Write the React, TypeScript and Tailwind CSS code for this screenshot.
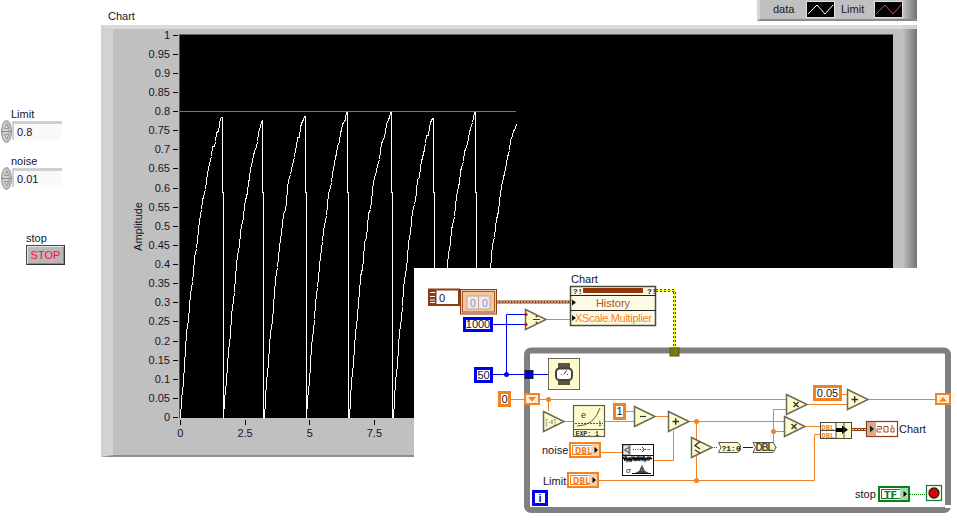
import { ReactNode } from "react";

const Y_LABELS = ["1","0.95","0.9","0.85","0.8","0.75","0.7","0.65","0.6","0.55","0.5","0.45","0.4","0.35","0.3","0.25","0.2","0.15","0.1","0.05","0"];
const X_LABELS = ["0", "2.5", "5", "7.5"];

const FALLS = [221.7, 262.3, 304.7, 347.3, 391.3, 432.7, 475.3, 516];
const TOPS = [117, 120, 116, 112, 112, 118, 112, 124];

// same recipe as the diagram: 1 - e^-x per sample with a little noise
function tracePoints() {
  const pts: string[] = [];
  let seed = 7;
  let start = 180;
  FALLS.forEach((fall, c) => {
    const n = Math.floor((fall - start) / 1.295);
    const scale = (417.5 - TOPS[c]) / (1 - Math.exp(-0.05 * n));
    for (let i = 0; i <= n; i++) {
      seed = (seed * 137 + 59) % 1009;
      const noise = i > 2 && i < n ? ((seed / 1009) - 0.5) * 6 : 0;
      const y = 417.5 - scale * (1 - Math.exp(-0.05 * i)) + noise;
      pts.push(`${Math.round(start + i * 1.295) + 0.5},${Math.round(y) + 0.5}`);
    }
    if (c < FALLS.length - 1) {
      const fx = Math.round(fall) + 0.5;
      pts.push(`${fx},${TOPS[c] + 0.5}`, `${fx},192.5`, `${fx + 1},192.5`, `${fx + 1},418`);
      start = fall + 1.5;
    }
  });
  return pts.join(" ");
}

function Numeric({ label, value }: { label: string; value: string }) {
  return (
    <div>
      <div className="ml-[11px] h-4 leading-4">{label}</div>
      <div className="-mt-[2px] ml-px flex h-[23px] items-start">
        <svg width="11" height="23" viewBox="0 0 11 23" className="shrink-0">
          <ellipse cx="5.5" cy="11.5" rx="5" ry="11" fill="#bdbdbd" stroke="#9a9a9a" />
          <ellipse cx="4.5" cy="11.5" rx="2.5" ry="9" fill="#d4d4d4" />
          <line x1="0" y1="11.5" x2="11" y2="11.5" stroke="#8a8a8a" />
          <path d="M5.5 4 L3.5 8.5 H7.5 Z M5.5 19 L3.5 14.5 H7.5 Z" fill="#e6e6e6" stroke="#666" strokeWidth="0.6" />
        </svg>
        <div className="mt-px h-[19px] w-[50px] border-l-2 border-t-[3px] border-l-[#d0d0d0] border-t-[#cfcfcf] bg-[#f9f9f9] pl-[3px] leading-[16px] text-[#111133]">
          {value}
        </div>
      </div>
    </div>
  );
}

function Zigzag({ color }: { color: string }) {
  return (
    <svg width="29" height="17" viewBox="0 0 29 17" className="shrink-0">
      <rect width="29" height="17" fill="#000" stroke="#e2e2e2" strokeWidth="2" />
      <polyline points="2,13 11,4 19,13 27,4" fill="none" stroke={color} />
    </svg>
  );
}

function Constant({ className, children }: { className: string; children: ReactNode }) {
  return (
    <div className={`absolute flex items-center justify-center border-[3px] bg-white leading-none ${className}`}>
      {children}
    </div>
  );
}

function Tri({ x, y, children }: { x: number; y: number; children?: ReactNode }) {
  return (
    <g>
      <polygon
        points={`${x + 0.5},${y + 0.5} ${x + 21},${y + 10.5} ${x + 0.5},${y + 20.5}`}
        fill="#fdfbcb"
        stroke="#6a6a58"
        strokeWidth="1.5"
      />
      {children}
    </g>
  );
}

function Terminal({ x, y, w, color, soft, text, tw }: { x: number; y: number; w: number; color: string; soft: string; text: string; tw: number }) {
  return (
    <g>
      <rect x={x + 1} y={y + 1} width={w - 2} height={14} fill="#fff" stroke={color} strokeWidth="2" />
      <rect x={x + 3.5} y={y + 3.5} width={w - 7} height={9} fill="#fff" stroke={color} />
      <rect x={x + w - 10} y={y + 2} width={8} height={12} fill={soft} />
      <text x={x + 6} y={y + 11.5} fontSize="9" fontWeight="700" fill={color} textLength={tw} lengthAdjust="spacingAndGlyphs" fontFamily="'DejaVu Sans', sans-serif">{text}</text>
      <path d={`M${x + w - 6.5} ${y + 5} L${x + w - 3} ${y + 8} L${x + w - 6.5} ${y + 11} Z`} fill="#000" />
    </g>
  );
}

function BlockDiagram() {
  const OR = "#f58220";
  return (
    <svg width="543" height="252" viewBox="414 268 543 252" className="absolute left-0 top-0">
      {/* loop */}
      <rect x="527" y="350.5" width="421" height="159.5" rx="4" fill="none" stroke="#808080" strokeWidth="6" />
      <rect x="945" y="505" width="6" height="3" fill="#fff" />

      {/* orange wires */}
      <g fill="none" stroke={OR} strokeWidth="1">
        <path d="M511 399.5 H524" />
        <path d="M539 399.5 H786" />
        <path d="M548.5 399.5 V411" />
        <path d="M564 421.5 H573" />
        <path d="M605 421.5 H634" />
        <path d="M626 411.5 H634" />
        <path d="M655 416.5 H668" />
        <path d="M689 421.5 H784" />
        <path d="M696.5 421.5 V480" />
        <path d="M601 452.5 H622" />
        <path d="M654 460.5 H673.5 V431" />
        <path d="M599 480.5 H814.5 V434.5 H820" />
        <path d="M777 447.5 H773.5 V409.5 H786" />
        <path d="M773.5 431.5 H784" />
        <path d="M805 426.5 H820" />
        <path d="M807 404.5 H847" />
        <path d="M842 394.5 H847" />
        <path d="M868 399.5 H936" />
        <path d="M546 319.5 H572" />
      </g>
      <g fill={OR}>
        <circle cx="548.5" cy="399.5" r="2.5" />
        <circle cx="696.5" cy="421.5" r="2.5" />
        <circle cx="696.5" cy="480.5" r="2.5" />
        <circle cx="773.5" cy="431.5" r="2.5" />
      </g>

      {/* blue wires */}
      <g fill="none" stroke="#0000f0" strokeWidth="1">
        <path d="M492 324.5 H526" />
        <path d="M492 374.5 H548" />
        <path d="M506.5 374.5 V314.5 H526" />
        <path d="M743 447.5 H753" />
      </g>
      <circle cx="506.5" cy="374.5" r="2.5" fill="#0000f0" />

      {/* striped wires */}
      <line x1="497" y1="302" x2="571" y2="302" stroke="#8c3c12" strokeWidth="3" />
      <line x1="497" y1="302" x2="571" y2="302" stroke="#f4e4d8" strokeWidth="1" strokeDasharray="2 1" />
      <line x1="852" y1="429.5" x2="866" y2="429.5" stroke="#8c3c12" strokeWidth="3" />
      <line x1="852" y1="429.5" x2="866" y2="429.5" stroke="#f4e4d8" strokeWidth="1" strokeDasharray="2 1" />
      <path d="M656 290.5 H674.5 V349" fill="none" stroke="#222" strokeWidth="3" strokeDasharray="2 2" />
      <path d="M656 290.5 H674.5 V349" fill="none" stroke="#f2f200" strokeWidth="1.4" />
      <path d="M712 447.5 H718" stroke="#008000" strokeDasharray="1 1" />
      <path d="M910 494.5 H926" stroke="#008000" strokeDasharray="1 1" />

      {/* tunnels */}
      <rect x="670" y="348" width="9" height="8" fill="#7a7a10" stroke="#55550a" />
      <rect x="525" y="370.5" width="8" height="8" fill="#0000e0" stroke="#223" />
      <rect x="525" y="394" width="14" height="10" fill="#fdf0d8" stroke={OR} strokeWidth="2" />
      <path d="M528 397 H536 L532 401.5 Z" fill={OR} />
      <rect x="936" y="394" width="14" height="10" fill="#fdf0d8" stroke={OR} strokeWidth="2" />
      <path d="M939 401.5 H947 L943 397 Z" fill={OR} />

      {/* brown constants */}
      <rect x="429" y="289.5" width="30" height="15.5" fill="#fff" stroke="#8c3c12" strokeWidth="2" />
      <rect x="429" y="289.5" width="7.5" height="15.5" fill="#8c3c12" />
      <path d="M430 292.5 H435 M430 296.5 H435 M430 300 H435 M430 302.5 H435" stroke="#fff" strokeWidth="1.2" />
      <text x="439" y="301.5" fontSize="11" fill="#111133">0</text>
      <rect x="460.5" y="289.5" width="36" height="24.5" fill="#f3c6a2" stroke="#8c3c12" />
      <rect x="462.5" y="291.5" width="32" height="20.5" fill="#f3c6a2" stroke="#a9582a" />
      <rect x="467" y="296" width="23" height="13" fill="#eeeaf0" stroke="#c8a68c" />
      <line x1="478.5" y1="296" x2="478.5" y2="309" stroke="#c8a68c" />
      <text x="470" y="306.5" fontSize="10.5" fill="#8892b8">0</text>
      <text x="482" y="306.5" fontSize="10.5" fill="#8892b8">0</text>

      {/* property node */}
      <rect x="570.5" y="286.5" width="85" height="39" fill="#fdfbe6" stroke="#4a4a3a" strokeWidth="1.5" />
      <line x1="570" y1="295.5" x2="656" y2="295.5" stroke="#222" />
      <line x1="570" y1="310.5" x2="656" y2="310.5" stroke="#222" />
      <rect x="583" y="288" width="60" height="5" fill="#94360a" />
      <text x="573" y="294" fontSize="8" fontWeight="700" fill="#222" fontFamily="'Liberation Mono', monospace">?!</text>
      <text x="647" y="294" fontSize="8" fontWeight="700" fill="#222" fontFamily="'Liberation Mono', monospace">?!</text>
      <path d="M572 299.5 L576 302.5 L572 305.5 Z M572 315 L576 318 L572 321 Z" fill="#111" />
      <text x="613" y="307" fontSize="11" fill="#a4562a" textAnchor="middle">History</text>
      <text x="575" y="322" fontSize="11" fill={OR} textLength="77">XScale.Multiplier</text>

      {/* prims */}
      <Tri x={525} y={309}>
        <path d="M533 319.5 H540" stroke="#333" />
        <circle cx="536.5" cy="316.5" r="0.9" fill="#333" />
        <circle cx="536.5" cy="322.5" r="0.9" fill="#333" />
        <circle cx="526" cy="314.5" r="1.6" fill="#e00000" />
        <circle cx="526" cy="324.5" r="1.6" fill="#e00000" />
      </Tri>

      <rect x="548.5" y="358.5" width="31" height="31" fill="#fdfbcb" stroke="#6a6a58" />
      <rect x="558" y="363" width="12" height="5.5" fill="#55554a" />
      <rect x="558" y="380" width="12" height="5" fill="#55554a" />
      <rect x="556" y="368.5" width="16" height="11.5" rx="3.5" fill="#fff" stroke="#44443a" strokeWidth="2" />
      <path d="M564 374.5 L566.5 370.5 M561 374.5 H561.8 M568 374.5 H567" stroke="#333" />

      <Tri x={543} y={411}>
        <text x="545" y="424" fontSize="8" fill="#333" textLength="11" lengthAdjust="spacingAndGlyphs" fontFamily="'Liberation Mono', monospace">[-x]</text>
      </Tri>

      <rect x="573.5" y="405.5" width="31" height="31" fill="#fdfbcb" stroke="#5f5f4e" strokeWidth="1.2" />
      <path d="M573.5 429.5 H604.5" stroke="#5f5f4e" />
      <path d="M575 423.5 H603" stroke="#555" strokeDasharray="2 1" />
      <path d="M577 426 Q594 426 600 408" fill="none" stroke="#555" />
      <text x="581" y="418" fontSize="9" fill="#333">e</text>
      <text x="598" y="425.5" fontSize="6.5" fill="#333">1</text>
      <text x="575.5" y="435.5" fontSize="6.5" fontWeight="700" fill="#333" fontFamily="'Liberation Mono', monospace">EXP: 1</text>

      <Tri x={634} y={406}>
        <path d="M640 416.5 H646" stroke="#333" strokeWidth="1.2" />
      </Tri>
      <Tri x={668} y={411}>
        <path d="M672.5 421.5 H679 M675.7 418.2 V424.8" stroke="#333" strokeWidth="1.4" />
      </Tri>
      <Tri x={691} y={437}>
        <path d="M700 441.5 L695 445.5 L700 449 M695 450 L700 453" fill="none" stroke="#333" strokeWidth="1.4" />
      </Tri>
      <Tri x={786} y={394}>
        <path d="M793.5 402 L798.5 407 M798.5 402 L793.5 407" stroke="#333" strokeWidth="1.4" />
      </Tri>
      <Tri x={784} y={416}>
        <path d="M791.5 424 L796.5 429 M796.5 424 L791.5 429" stroke="#333" strokeWidth="1.4" />
      </Tri>
      <Tri x={847} y={389}>
        <path d="M851.5 399.5 H858 M854.7 396.2 V402.8" stroke="#333" strokeWidth="1.4" />
      </Tri>

      {/* gaussian noise */}
      <rect x="622.5" y="444.5" width="31" height="31" fill="#fff" stroke="#111" />
      <path d="M622.5 455.5 H653.5" stroke="#111" />
      <rect x="623" y="445" width="7" height="10" fill="#e8e8e8" stroke="#333" strokeWidth="0.6" />
      <path d="M625 449 H627 L629 446.5 V453.5 L627 451 H625 Z" fill="none" stroke="#222" strokeWidth="0.8" />
      <path d="M635 449.5 H650" stroke="#e00000" strokeDasharray="1 1.5" />
      <path d="M633 449.5 h1 M642 447 l2.5 2.5 l-2.5 2.5 M649 449.5 h1" fill="none" stroke="#e00000" />
      <path d="M623 459 l1 -2 l1 4 l1 -5 l1 5 l1 -3 l1 3 l1 -4 l1 5 l1 -5 l1 3 l1 -3 l1 4 l1 -4 l1 4 l1 -5 l1 5 l1 -4 l1 3 l1 -3 l1 4 l1 -5 l1 5 l1 -3 l1 2 l1 -3 l1 3 l1 -3 l1 2 l1 -1" fill="none" stroke="#000" strokeWidth="1.1" />
      <text x="626" y="472.5" fontSize="8" fill="#111">σ</text>
      <path d="M634 473.5 L639 471 L642 464.5 L645 471 L650 473.5 Z" fill="#444" />
      <path d="M636 473.5 H650 M639 470 H646 M640.5 467 H644" stroke="#fff" strokeWidth="0.6" strokeDasharray="1 1" />
      <path d="M632 473.5 H651" stroke="#111" />

      <Terminal x={569} y={442} w={32} color={OR} soft="#fbd0a8" text="DBL" tw={17} />
      <Terminal x={567} y={472} w={32} color={OR} soft="#fbd0a8" text="DBL" tw={17} />
      <Terminal x={878} y={486} w={32} color="#0a8020" soft="#a8d8a8" text="TF" tw={13} />

      {/* conversions */}
      <path d="M718.5 442.5 H738 Q743.5 447.5 738 452.5 H718.5 L721 447.5 Z" fill="#fdfbcb" stroke="#555" />
      <text x="721.5" y="450.5" fontSize="8" fontWeight="700" fill="#222" fontFamily="'Liberation Mono', monospace">?1:0</text>
      <path d="M753 442.5 H773 Q778 447.5 773 452.5 H753 L755.5 447.5 Z" fill="#fdfbcb" stroke="#555" />
      <text x="755.5" y="451" fontSize="10" fontWeight="700" fill="#4a4a3a" fontFamily="'Liberation Sans', sans-serif" textLength="18">DBL</text>

      {/* bundle */}
      <rect x="820.5" y="422.5" width="31" height="16" fill="#fdfbcb" stroke="#4a4a3a" />
      <rect x="821" y="423" width="15" height="15" fill="#fff" />
      <path d="M820.5 430.5 H836 M836 422.5 V438.5" stroke="#4a4a3a" />
      <text x="821.5" y="429.8" fontSize="7" fontWeight="700" fill={OR} fontFamily="'Liberation Mono', monospace">DBL</text>
      <text x="821.5" y="437.5" fontSize="7" fontWeight="700" fill={OR} fontFamily="'Liberation Mono', monospace">DBL</text>
      <path d="M836 428 H842 V425.5 L848 429.8 L842 434 V432 H836 Z" fill="#000" />
      <path d="M844 422.5 V438.5" stroke="#4a4a3a" />

      {/* chart terminal */}
      <rect x="866.5" y="421.5" width="31" height="15" fill="#fff" stroke="#8c3c12" strokeWidth="1.2" />
      <rect x="867" y="422" width="9" height="14" fill="#dfa98c" />
      <path d="M870 425.5 L874 429 L870 432.5 Z" fill="#222" />
      <path d="M877 426.5 H881.5 V429 H877 V432 H881.5 M884 426.5 H888 V432 H884 Z M891 426 H893 M891 428 H894 V432 H891 V428" fill="none" stroke="#8c3c12" strokeWidth="0.9" />

      {/* stop condition */}
      <rect x="926.5" y="485.5" width="15" height="15" fill="#fdfbe0" stroke="#157a30" strokeWidth="1.2" />
      <circle cx="934" cy="493" r="5" fill="#e00000" stroke="#222" strokeWidth="1.3" />
    </svg>
  );
}

export default function App() {
  const trace = tracePoints();
  return (
    <div className="relative flex h-[520px] w-[957px] overflow-hidden bg-white text-[11px] text-[#15152a] [font-family:'Liberation_Sans',sans-serif]">
      {/* front panel controls */}
      <div className="w-[101px] shrink-0 pt-[106px]">
        <Numeric label="Limit" value="0.8" />
        <div className="mt-[10px]">
          <Numeric label="noise" value="0.01" />
        </div>
        <div className="ml-[26px] mt-[40px] h-4 leading-4">stop</div>
        <div className="-mt-px ml-[26px] flex h-[20px] w-[39px] items-center justify-center border border-[#44444c] border-b-[#333] border-r-[#333] bg-[#b9b9b9] text-[#ff0a3c] shadow-[inset_1px_1px_0_#e6e6e6,inset_-1px_-1px_0_#8a8a8a]">
          STOP
        </div>
      </div>

      {/* chart */}
      <div className="w-[816px] shrink-0">
        <div className="flex h-[25px] items-start justify-between">
          <div className="ml-[7px] mt-[8px] h-4 leading-4">Chart</div>
          <div className="flex h-[21px] w-[160px] items-center border-b-2 border-l-[3px] border-b-[#8a8a8a] border-l-[#d6d6d6] bg-[#c0c0c0]">
            <span className="ml-[13px] w-[33px]">data</span>
            <Zigzag color="#ffffff" />
            <span className="ml-[6px] w-[33px]">Limit</span>
            <Zigzag color="#e8484c" />
            <div className="ml-auto h-full w-[14px] bg-gradient-to-r from-[#c0c0c0] to-[#737373]" />
          </div>
        </div>

        <div className="flex h-[432px]">
          <div className="w-[802px] border-b-2 border-l-[12px] border-t-4 border-b-[#8c8c8c] border-l-[#d2d2d2] border-t-[#dadada] bg-[#c0c0c0]">
            <div className="flex pt-[5px]">
              <div className="flex h-[384px] w-[33px] items-center justify-end">
                <span className="rotate-180 leading-4 [writing-mode:vertical-rl]">Amplitude</span>
              </div>
              <div className="-mt-[5.5px] flex h-[395.5px] w-[33px] flex-col justify-between">
                {Y_LABELS.map((label) => (
                  <div key={label} className="flex h-[13px] items-center justify-end leading-[13px]">
                    <span>{label}</span>
                    <span className="ml-[3px] mr-px h-px w-[5px] bg-black" />
                  </div>
                ))}
              </div>
              <div>
                <div className="h-[384px] w-[714px] border-l border-t border-l-[#505050] border-t-[#606060] bg-black">
                  <svg width="713" height="383" viewBox="180 35 713 383" className="block">
                    <line x1="180" y1="111.5" x2="516" y2="111.5" stroke="#e8484c" />
                    <polyline points={trace} fill="none" stroke="#fff" strokeWidth="1" shapeRendering="crispEdges" />
                  </svg>
                </div>
                <div className="-ml-[31px] flex">
                  {X_LABELS.map((label) => (
                    <div key={label} className="flex w-[64.7px] flex-col items-center">
                      <span className="mt-[2px] h-[5px] w-px bg-black" />
                      <span className="leading-4">{label}</span>
                    </div>
                  ))}
                </div>
              </div>
            </div>
          </div>
          <div className="w-[14px] border-t-4 border-t-[#d2d2d2] bg-gradient-to-r from-[#c0c0c0] to-[#737373]" />
        </div>
      </div>

      {/* block diagram window on top of the panel */}
      <div className="absolute left-[414px] top-[268px] h-[252px] w-[543px] bg-white">
        <BlockDiagram />
        <div className="absolute left-[157px] top-[3px] leading-4">Chart</div>
        <div className="absolute left-[128px] top-[174px] leading-4">noise</div>
        <div className="absolute left-[129px] top-[205px] leading-4">Limit</div>
        <div className="absolute left-[485px] top-[153px] leading-4">Chart</div>
        <div className="absolute left-[441px] top-[218px] leading-4">stop</div>

        <Constant className="left-[49px] top-[49px] h-[15px] w-[30px] border-[#0000f0]">1000</Constant>
        <Constant className="left-[60px] top-[99px] h-[16px] w-[19px] border-[#0000f0]">50</Constant>
        <Constant className="left-[84px] top-[123px] h-[16px] w-[13px] border-[#f58220]">0</Constant>
        <Constant className="left-[199px] top-[135px] h-[17px] w-[13px] border-[#f58220]">1</Constant>
        <Constant className="left-[399px] top-[117px] h-[16px] w-[29px] border-[#f58220]">0.05</Constant>
        <Constant className="left-[118px] top-[222px] h-[16px] w-[16px] border-2 border-[#0000f0] font-bold text-[#0000f0]">i</Constant>
      </div>
    </div>
  );
}
